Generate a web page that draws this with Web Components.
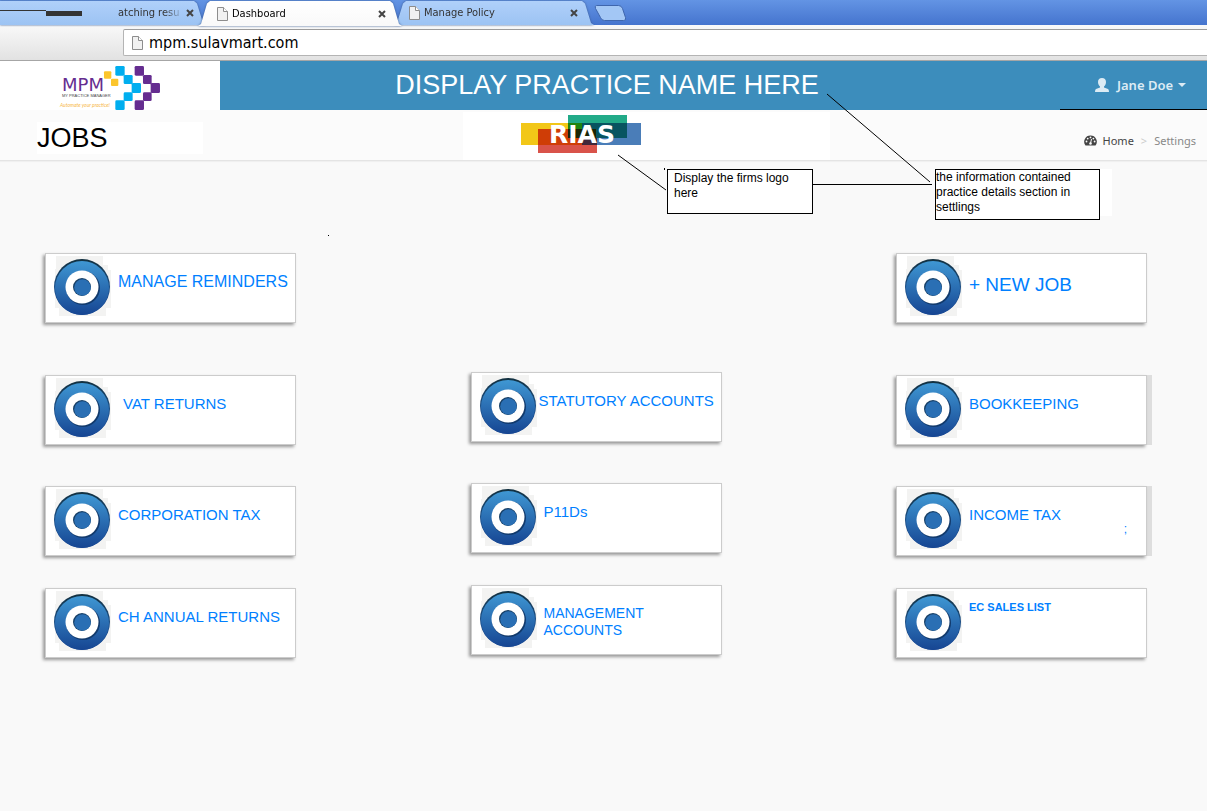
<!DOCTYPE html>
<html lang="en">
<head>
<meta charset="utf-8">
<title>Dashboard</title>
<style>
  html, body { margin: 0; }
  body { min-height: 100vh; background: #f9f9f9; font-family: "Liberation Sans", Arial, sans-serif; color: #000; }
</style>
</head>
<body>
<jobs-page></jobs-page>

<script>
const define = (name, html, setup) => {
  const template = document.createElement('template');
  template.innerHTML = html;
  customElements.define(name, class extends HTMLElement {
    constructor() {
      super();
      this.attachShadow({ mode: 'open' }).append(template.content.cloneNode(true));
    }
    connectedCallback() { if (setup) setup(this, this.shadowRoot); }
  });
};

define('file-icon', `
  <style>:host { display: block; flex: none; width: 12px; height: 14px; } svg { display: block; }</style>
  <svg width="12" height="14" viewBox="0 0 12 14" aria-hidden="true">
    <path d="M1.500 .5h6l4 4v9h-10z" fill="#f1f1f1" stroke="#8d8d8d"/>
    <path d="M7.500 .5v4h4" fill="#fff" stroke="#8d8d8d"/>
  </svg>`);

define('browser-tab', `
  <style>
    :host { display: block; flex: none; width: 200px; height: 24px; margin-left: -8px; filter: drop-shadow(0 0 1px #3c5c94); }
    :host([first]) { margin-left: 0; width: 206px; }
    :host([active]) { z-index: 1; width: 204px; height: 25px; }
    .shape {
      box-sizing: border-box; display: flex; align-items: center; height: 100%; padding: 0 15px 0 14px;
      background: linear-gradient(#b0d0fa, #9cc3f3);
      clip-path: polygon(0 100%, 3px 92%, 9px 10%, 12px 0, calc(100% - 12px) 0, calc(100% - 9px) 10%, calc(100% - 3px) 92%, 100% 100%);
    }
    :host([first]) .shape { padding-left: 0; padding-right: 11px; clip-path: polygon(0 100%, 0 0, calc(100% - 12px) 0, calc(100% - 9px) 10%, calc(100% - 3px) 92%, 100% 100%); }
    :host([active]) .shape { background: linear-gradient(#fff, #f9f9f9); padding-right: 15px; padding-left: 18px; }
    .label { flex: 1; min-width: 0; padding-left: 4px; font: 11px/16px "DejaVu Sans Condensed", Tahoma, sans-serif; color: #333; white-space: nowrap; overflow: hidden; }
    :host([active]) .label { color: #000; }
    :host([first]) .label { flex: none; width: 62px; padding-left: 0; margin-left: auto; margin-right: 5px; mask-image: linear-gradient(90deg, #000 46px, transparent 66px); }
    :host([first]) file-icon { display: none; }
    .mark { display: none; }
    :host([first]) .mark { display: block; }
    button { flex: none; width: 10px; height: 10px; padding: 0; border: 0; background: none; }
    button svg { display: block; }
  </style>
  <div class="shape">
    <svg class="mark" width="84" height="8" aria-hidden="true"><path d="M0 1.500h46" stroke="#333"/><path d="M46 2h36v5h-36z" fill="#333"/></svg>
    <file-icon></file-icon>
    <span class="label"><slot></slot></span>
    <button type="button" aria-label="Close tab"><svg width="10" height="10" viewBox="0 0 10 10"><path d="M2 2l6 6M8 2l-6 6" stroke="#444" stroke-width="2"/></svg></button>
  </div>`);

define('browser-chrome', `
  <style>
    :host { display: block; }
    .strip { display: flex; align-items: flex-start; height: 24px; padding-top: 1px; background: linear-gradient(#6394e4, #4574ce); }
    .new { width: 33px; height: 17px; margin: 4px 0 0; padding: 0; border: 0; background: none; }
    .new svg { display: block; }
    .bar { box-sizing: border-box; height: 36px; padding: 4px 0 4px 123px; background: linear-gradient(#f9f9f9, #e2e2e2); border-bottom: 1px solid #a6a6a6; }
    label { box-sizing: border-box; display: flex; align-items: center; height: 27px; padding-left: 7px; background: #fff; border: 1px solid #b4b4b4; border-top-color: #9c9c9c; border-right: 0; border-radius: 2px 0 0 2px; }
    input { flex: 1; min-width: 0; border: 0; padding: 0 0 0 6px; background: none; outline: 0; font: 16px/22px "DejaVu Sans Condensed", Tahoma, sans-serif; color: #000; }
  </style>
  <div class="strip">
    <browser-tab first>atching result</browser-tab>
    <browser-tab active>Dashboard</browser-tab>
    <browser-tab>Manage Policy</browser-tab>
    <button class="new" type="button" aria-label="New tab"><svg width="33" height="17" viewBox="0 0 33 17"><path d="M2.500 .5h22q3 0 4 3l3 9q1 3-2 3h-19q-3 0-4-3l-5-9q-1-3 1-3z" fill="#a3c7f5" stroke="#3f66ad"/></svg></button>
  </div>
  <div class="bar"><label><file-icon></file-icon><input type="text" aria-label="Address" value="mpm.sulavmart.com"></label></div>`);

define('mpm-logo', `
  <style>:host { display: block; } svg { display: block; }</style>
  <svg width="220" height="49" viewBox="0 0 220 49" role="img" aria-label="MPM My Practice Manager">
    <g transform="scale(.3333) translate(0 -9)">
      <g fill="#fbc52d"><rect x="312" y="40" width="22" height="22" rx="3"/><rect x="333" y="62" width="22" height="22" rx="3"/></g>
      <g fill="#00aeef"><rect x="346" y="24" width="28" height="29" rx="4"/><rect x="371" y="51" width="27" height="27" rx="4"/><rect x="395" y="75" width="28" height="30" rx="4"/><rect x="371" y="103" width="27" height="26" rx="4"/><rect x="346" y="127" width="28" height="29" rx="4"/></g>
      <g fill="#652d90"><rect x="404" y="24" width="28" height="29" rx="4"/><rect x="429" y="51" width="26" height="27" rx="4"/><rect x="452" y="75" width="28" height="30" rx="4"/><rect x="429" y="103" width="26" height="26" rx="4"/><rect x="404" y="127" width="28" height="29" rx="4"/></g>
    </g>
    <text x="62" y="30" font-family="DejaVu Sans" font-size="18" fill="#652d90">MPM</text>
    <text x="62" y="36" font-family="Liberation Sans" font-size="4" fill="#444">MY PRACTICE MANAGER</text>
    <text x="60" y="46" font-family="Lato" font-style="italic" font-size="5" fill="#f7b84a">Automate your practice!</text>
  </svg>`);

define('site-header', `
  <style>
    :host { display: flex; height: 49px; background: #3c8dbc; }
    .brand { flex: none; width: 220px; background: #fff; }
    .title { flex: 1; margin: 0; padding-right: 66px; text-align: center; font-weight: 400; font-size: 27px; line-height: 49px; color: #fff; white-space: nowrap; }
    .user { box-sizing: border-box; flex: none; width: 147px; display: flex; align-items: center; padding-left: 35px; border: 0; border-bottom: 1px solid #000; background: none; color: #dcebf4; font: 600 13px/20px "Noto Sans", "Open Sans", sans-serif; }
    .user span { padding: 0 5px 0 8px; }
    .user svg { flex: none; }
  </style>
  <div class="brand"><mpm-logo></mpm-logo></div>
  <p class="title">DISPLAY PRACTICE NAME HERE</p>
  <button class="user" type="button">
    <svg width="14" height="14" viewBox="0 0 14 14" aria-hidden="true"><path d="M7 0c2.500 0 4 1.500 4 4 0 2-1 3.500-2 4.500v1l4 1.500q1 .5 1 3H0q0-2.500 1-3l4-1.500v-1C4 7.500 3 6 3 4c0-2.500 1.500-4 4-4z" fill="currentColor"/></svg>
    <span>Jane Doe</span>
    <svg width="8" height="4" viewBox="0 0 8 4" aria-hidden="true"><path d="M0 0h8L4 4z" fill="currentColor"/></svg>
  </button>`);

define('firm-logo', `
  <style>:host { display: block; } svg { display: block; }</style>
  <svg width="120" height="38" viewBox="0 0 120 38" role="img" aria-label="RIAS">
    <path fill="#f2c718" d="M0 8h61v22H0z"/>
    <path fill="#4a7db8" d="M61 8h59v22H61z"/>
    <path fill="#22aa88" d="M47 0h59v8H47z"/>
    <path fill="#d9534a" d="M17 30h59v8H17z"/>
    <path fill="#cf3d06" d="M17 14h44v16H17z"/>
    <path fill="#1f8410" d="M47 8h14v15H47z"/>
    <path fill="#085460" d="M61 8h45v15H61z"/>
    <path fill="#1c2606" d="M47 14h28v9H47z"/>
    <path fill="#40283a" d="M61 23h15v7H61z"/>
    <text x="61" y="28" text-anchor="middle" font-family="DejaVu Sans" font-weight="700" font-size="25" fill="#fff">RIAS</text>
  </svg>`);

define('page-heading', `
  <style>
    :host { box-sizing: border-box; display: grid; grid-template-columns: 1fr 367px 1fr; align-items: center; height: 51px; background: #fbfbfb; border-bottom: 1px solid #e4e4e4; box-shadow: 0 1px 1px #f0f0f0; }
    h1 { width: 166px; margin: 6px 0 0 37px; background: #fff; font-weight: 400; font-size: 27px; line-height: 32px; }
    .firm { align-self: stretch; display: flex; justify-content: center; margin: 2px -43px 0 43px; padding: 3px 132px 0 0; background: #fff; }
    nav { justify-self: end; display: flex; align-items: center; padding: 11px 11px 0 0; font: 11px/16px "Noto Sans", "Open Sans", sans-serif; color: #ccc; }
    nav a { color: #444; text-decoration: none; padding-left: 6px; }
    nav i { font-style: normal; padding: 0 7px; }
    nav span { color: #888; }
  </style>
  <h1>JOBS</h1>
  <div class="firm"><firm-logo></firm-logo></div>
  <nav aria-label="Breadcrumb">
    <svg width="13" height="11" viewBox="0 0 13 11" aria-hidden="true"><path d="M6.500 .5A6.200 6.200 0 0 0 1.500 10.500h10A6.200 6.200 0 0 0 6.500 .5z" fill="#444"/><g fill="#fbfbfb"><circle cx="2.500" cy="6.500" r=".9"/><circle cx="3.700" cy="3.600" r=".9"/><circle cx="6.500" cy="2.400" r=".9"/><circle cx="9.400" cy="3.600" r=".9"/><circle cx="10.600" cy="6.500" r=".9"/></g><path d="M6.500 8.500L7.500 4" stroke="#fbfbfb"/><circle cx="6.500" cy="8.500" r="1.300" fill="#fbfbfb"/></svg>
    <a href="#home">Home</a><i>&gt;</i><span>Settings</span>
  </nav>`);

define('job-card', `
  <style>
    :host { display: block; }
    a { box-sizing: border-box; display: flex; align-items: flex-start; width: 251px; height: 70px; padding: 2px 6px 0 7px; background: #fff; border: 1px solid #ccc; box-shadow: -2px 2px 3px #999; color: #007fff; text-decoration: none; font-size: 15px; line-height: 17px; }
    :host([edge]) a { box-shadow: -2px 2px 3px #999, 5px 0 0 #dedede; }
    svg { flex: none; }
    .label { flex: 1; padding: 17px 0 0 6px; white-space: pre-line; }
    :host([tight]) .label { padding-left: 1px; margin-right: -5px; }
    :host([indent]) .label { padding-left: 11px; }
    :host([wide]) .label { font-size: 16px; margin-right: -5px; }
    :host([large]) .label { font-size: 19px; line-height: 24px; }
    :host([medium]) .label { font-size: 14px; }
    :host([small]) .label { padding-top: 8px; font-size: 11px; font-weight: 700; }
    .extra { align-self: flex-end; padding: 0 13px 17px 0; font-size: 12px; }
  </style>
  <a href="#job">
    <svg width="59" height="61" viewBox="0 0 59 61" aria-hidden="true">
      <defs>
        <linearGradient id="disc" x2="0" y2="1"><stop stop-color="#3f97d3"/><stop offset="1" stop-color="#164592"/></linearGradient>
        <linearGradient id="rim" x2="0" y2="1"><stop stop-color="#12303f"/><stop offset=".5" stop-color="#1c4f86"/><stop offset="1" stop-color="#164592"/></linearGradient>
      </defs>
      <path d="M3 0h47v9h5v5h3v38h-5v8H6v-8H2V13h1z" fill="#f3f3f2"/>
      <circle cx="29" cy="31" r="28" fill="url(#rim)"/>
      <circle cx="29" cy="32" r="27" fill="url(#disc)"/>
      <circle cx="30" cy="32" r="17" fill="#123a6c"/>
      <circle cx="29" cy="31" r="16.500" fill="#fff"/>
      <circle cx="29" cy="31" r="9" fill="#173f66"/>
      <circle cx="29.500" cy="31.500" r="8.300" fill="#2a6fb4"/>
    </svg>
    <span class="label"><slot></slot></span>
    <span class="extra"><slot name="extra"></slot></span>
  </a>`, (host, root) => { if (!host.querySelector('[slot=extra]')) root.querySelector('.extra').remove(); });

define('job-column', `
  <style>
    :host { display: flex; flex-direction: column; }
    ::slotted(*) { margin-bottom: 41px; }
    ::slotted([lead]) { margin-bottom: 52px; }
    ::slotted([third]) { margin-bottom: 32px; }
  </style>
  <slot></slot>`);

define('note-box', `
  <style>
    :host { box-sizing: border-box; border: 1px solid #000; background: #fff; font-size: 12px; line-height: 15px; }
  </style>
  <slot></slot>`);

/* Callouts lie over the header and the page, tied to the centred title and logo. */
define('note-layer', `
  <style>
    :host { position: absolute; inset: 0 0 auto 0; display: flex; justify-content: center; pointer-events: none; }
    .stage { position: relative; flex: none; width: 1111px; height: 240px; }
    svg { position: absolute; inset: 0; }
    note-box { position: absolute; top: 169px; }
    .logo { left: 619px; width: 146px; height: 45px; padding: 1px 6px; }
    .details { left: 887px; width: 165px; height: 51px; box-shadow: 12px -4px 0 #fff; clip-path: inset(0 -12px 0 0); }
  </style>
  <div class="stage">
    <note-box class="logo">Display the firms logo here</note-box>
    <note-box class="details">the information contained practice details section in settlings</note-box>
    <svg width="1111" height="240" aria-hidden="true"><path d="M779 94L882 182M570 155L618 190M765 184.500h119" fill="none" stroke="#000"/><path d="M616 168h1v2h-1zM280 235h1v1h-1z"/></svg>
  </div>`);

define('jobs-page', `
  <style>
    :host { display: block; position: relative; }
    main { display: flex; justify-content: space-between; align-items: flex-start; padding: 92px 60px 60px 45px; }
    .mid { padding-top: 119px; }
  </style>
  <browser-chrome></browser-chrome>
  <site-header></site-header>
  <page-heading></page-heading>
  <main>
    <job-column>
      <job-card lead wide>MANAGE REMINDERS</job-card>
      <job-card indent>VAT RETURNS</job-card>
      <job-card third>CORPORATION TAX</job-card>
      <job-card>CH ANNUAL RETURNS</job-card>
    </job-column>
    <job-column class="mid">
      <job-card tight>STATUTORY ACCOUNTS</job-card>
      <job-card third>P11Ds</job-card>
      <job-card medium>MANAGEMENT ACCOUNTS</job-card>
    </job-column>
    <job-column>
      <job-card lead large>+ NEW JOB</job-card>
      <job-card edge>BOOKKEEPING</job-card>
      <job-card edge third>INCOME TAX<span slot="extra">;</span></job-card>
      <job-card small>EC SALES LIST</job-card>
    </job-column>
  </main>
  <note-layer></note-layer>`);
</script>
</body>
</html>
